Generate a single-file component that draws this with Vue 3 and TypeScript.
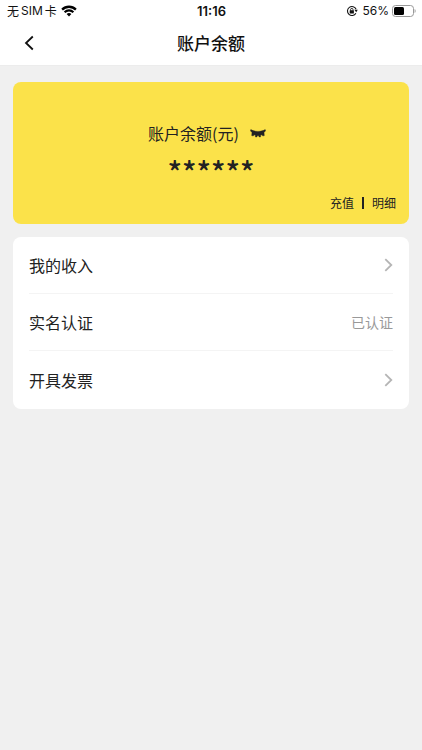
<script setup lang="ts">
import { ref } from 'vue'

interface Row {
  label: string
  status?: string
}

const rows: Row[] = [
  { label: '我的收入' },
  { label: '实名认证', status: '已认证' },
  { label: '开具发票' },
]

const balance = '0.00'
const hidden = ref(true)
</script>

<template>
  <div class="page">
    <header class="top">
      <div class="status">
        <div class="carrier">
          <span>无</span><span class="latin">SIM</span><span>卡</span>
          <svg class="wifi" width="16" height="12" viewBox="0 0 16 12" aria-hidden="true">
            <path d="M1.1 4.6a9.8 9.8 0 0 1 13.8 0" fill="none" stroke="#000" stroke-width="2.3" />
            <path d="M3.6 7.2a6.2 6.2 0 0 1 8.8 0" fill="none" stroke="#000" stroke-width="2.1" />
            <path d="M5.6 9.1a3.4 3.4 0 0 1 4.8 0L8 11.6z" fill="#000" />
          </svg>
        </div>
        <time class="clock">11:16</time>
        <div class="power">
          <svg width="12" height="12" viewBox="0 0 12 12" aria-hidden="true">
            <path d="M10.1 4.2A4.5 4.5 0 1 0 9.9 8.2" fill="none" stroke="#111" stroke-width="1.1" />
            <path d="M8.4 4.7h3.4l-1.6 2.5z" fill="#111" />
            <rect x="3.7" y="5.2" width="4.2" height="3.2" rx=".5" fill="#111" />
            <path d="M4.6 5.6V4.6a1.2 1.2 0 0 1 2.4 0v1" fill="none" stroke="#111" stroke-width=".9" />
          </svg>
          <span class="latin">56%</span>
          <svg width="25" height="12" viewBox="0 0 25 12" aria-hidden="true">
            <rect x="1.5" y=".5" width="21" height="11" rx="3" fill="#fff" stroke="#999" />
            <rect x="3" y="2" width="10" height="8" rx="1.5" fill="#000" />
            <path d="M23.6 4v4c1.4-.6 1.4-3.4 0-4z" fill="#999" />
          </svg>
        </div>
      </div>
      <nav class="bar">
        <button class="back" type="button" aria-label="返回">
          <svg width="10" height="16" viewBox="0 0 10 16" aria-hidden="true">
            <path d="M8.8 1.5 2 8l6.8 6.5" fill="none" stroke="#111" stroke-width="1.8" />
          </svg>
        </button>
        <h1>账户余额</h1>
      </nav>
    </header>

    <main>
      <section class="card">
        <div class="caption">
          <span>账户余额(元)</span>
          <button type="button" aria-label="显示或隐藏余额" @click="hidden = !hidden">
            <svg width="16" height="10" viewBox="0 0 16 10" aria-hidden="true">
              <path d="M.8 1.6C4.6 4 11.4 4 15.2 1.6L15.6 2.8 14 4.6 14.3 7.6 12.8 8 12 6.8 10.6 7.3 10.5 9H9.2L8.8 7.8H7.2L6.8 9H5.5L5.4 7.3 4 6.8 3.2 8 1.7 7.6 2 4.6.4 2.8z" fill="#222" stroke="#222" stroke-width=".4" stroke-linejoin="round" />
            </svg>
          </button>
        </div>
        <p class="amount">{{ hidden ? '******' : balance }}</p>
        <div class="actions">
          <a href="#recharge">充值</a>
          <span class="bar-mark"></span>
          <a href="#details">明细</a>
        </div>
      </section>

      <ul class="list">
        <li v-for="row in rows" :key="row.label">
          <a href="#">
            <span>{{ row.label }}</span>
            <span v-if="row.status" class="state">{{ row.status }}</span>
            <svg v-else width="9" height="14" viewBox="0 0 9 14" aria-hidden="true">
              <path d="M1.3 1.2 7.3 7l-6 5.8" fill="none" stroke="#b5b5b5" stroke-width="1.8" />
            </svg>
          </a>
        </li>
      </ul>
    </main>
  </div>
</template>

<style>
body {
  background: #f0f0f0;
}
</style>

<style scoped>
.page {
  min-height: 100vh;
  background: #f0f0f0;
  color: #222;
  font-family: "Noto Sans CJK SC", sans-serif;
}
.top {
  background: #fff;
  border-bottom: 1px solid #ececec;
}
.status {
  display: grid;
  grid-template-columns: 1fr auto 1fr;
  align-items: center;
  height: 22px;
  padding: 0 6px 0 7px;
  color: #111;
  font-size: 12px;
  line-height: 22px;
}
.carrier,
.power {
  display: flex;
  align-items: center;
  gap: 2px;
}
.power {
  justify-content: flex-end;
}
.power .latin {
  margin-left: 2px;
}
.wifi {
  margin-left: 2px;
}
.latin,
.clock {
  font-family: Inter, sans-serif;
}
.clock {
  font-size: 13px;
  font-weight: 600;
}
.bar {
  position: relative;
  display: flex;
  align-items: center;
  justify-content: center;
  height: 43px;
  box-sizing: border-box;
  padding-bottom: 2px;
}
button {
  display: flex;
  padding: 0;
  border: 0;
  background: none;
}
.back {
  position: absolute;
  left: 24px;
}
h1 {
  margin: 0;
  color: #111;
  font-size: 17px;
  font-weight: 500;
  line-height: 24px;
}
main {
  display: grid;
  gap: 13px;
  padding: 16px 13px;
}
.card {
  display: flex;
  flex-direction: column;
  height: 142px;
  box-sizing: border-box;
  padding: 39px 13px 11px;
  border-radius: 8px;
  background: #fbe24a;
}
.caption {
  display: flex;
  align-items: center;
  justify-content: center;
  gap: 11px;
  padding-right: 8px;
  font-size: 16px;
  line-height: 24px;
}
.amount {
  margin: 7px 0 0;
  font-size: 30px;
  font-weight: 500;
  line-height: 38px;
  text-align: center;
}
.actions {
  display: flex;
  align-items: center;
  justify-content: flex-end;
  gap: 8px;
  margin-top: auto;
  font-size: 12px;
  line-height: 20px;
}
.bar-mark {
  width: 2px;
  height: 12px;
  background: #222;
}
a {
  color: inherit;
  text-decoration: none;
}
.list {
  margin: 0;
  padding: 0 16px;
  border-radius: 8px;
  background: #fff;
  list-style: none;
}
.list a {
  display: flex;
  align-items: center;
  justify-content: space-between;
  height: 56px;
  padding-bottom: 1px;
  box-sizing: border-box;
  font-size: 16px;
  line-height: 24px;
}
.list li {
  border-bottom: 1px solid #f4f4f4;
}
.list li:last-child {
  padding: 1px 0;
  border-bottom: 0;
}
.list .state {
  color: #999;
  font-size: 14px;
}
</style>
